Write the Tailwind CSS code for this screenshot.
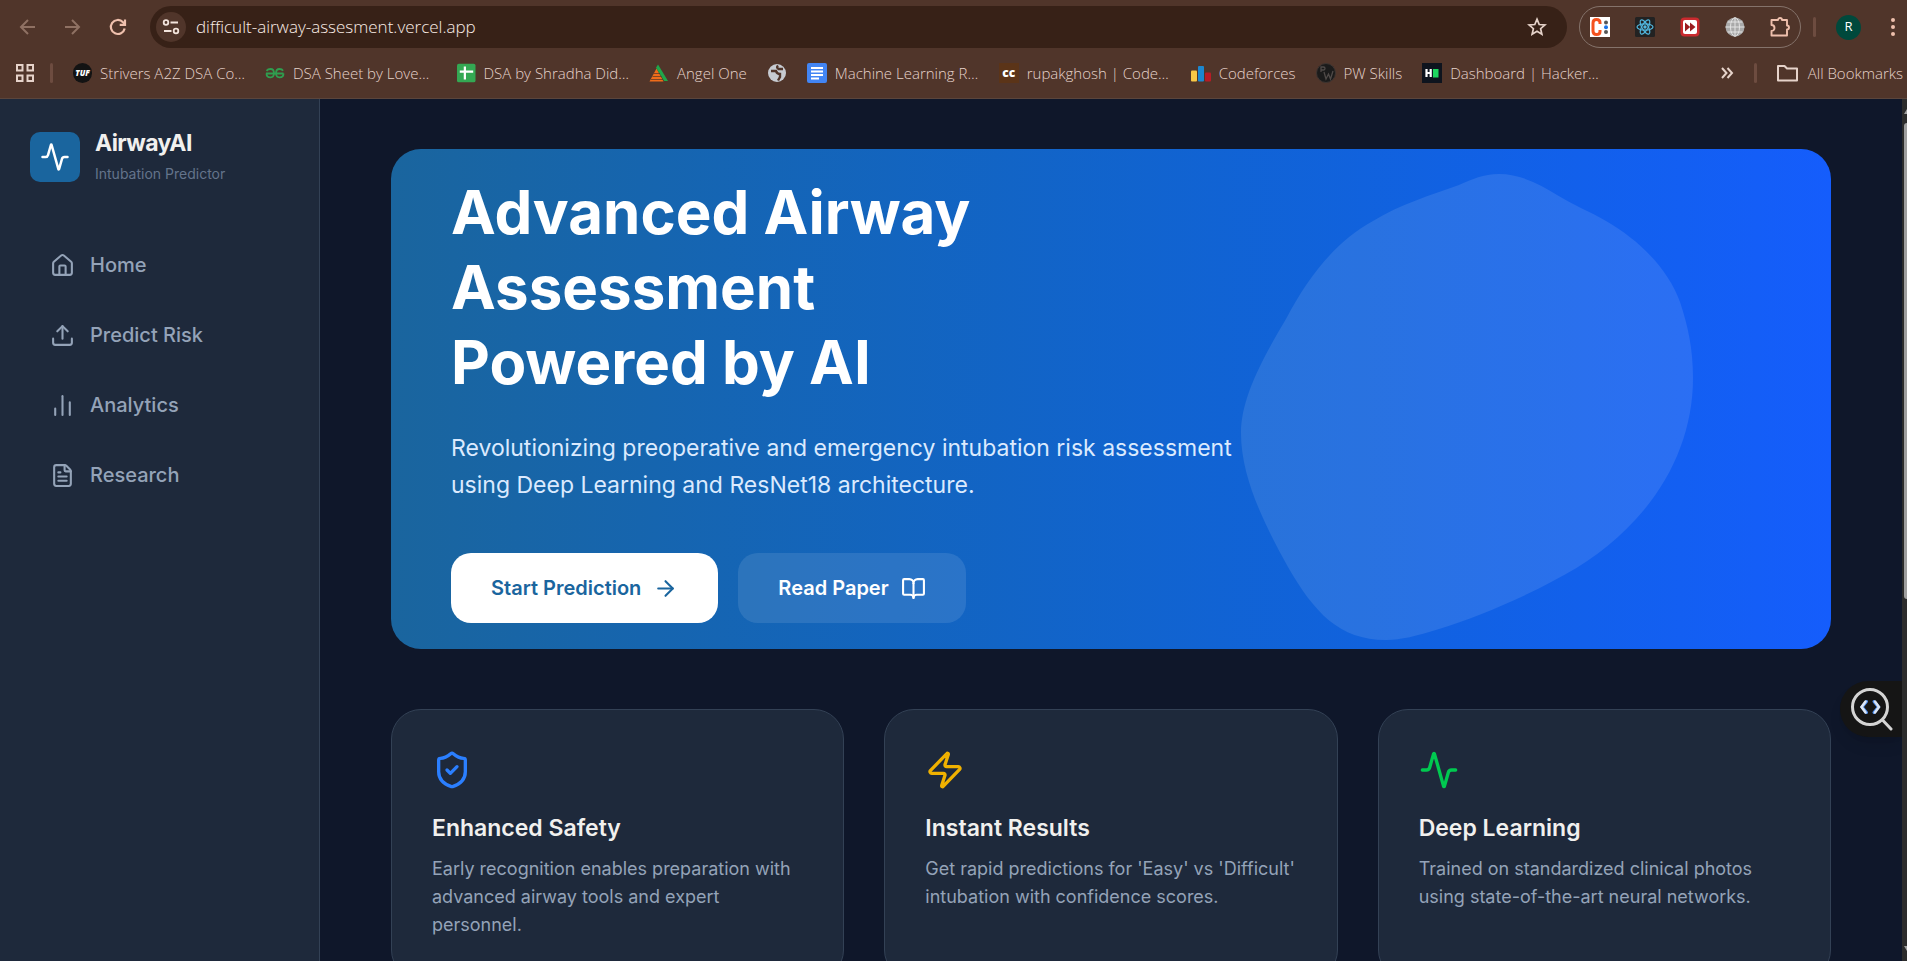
<!DOCTYPE html>
<html lang="en">
<head>
    <meta charset="UTF-8">
    <meta name="viewport" content="width=device-width, initial-scale=1.0">
    <title>AirwayAI - Intubation Predictor</title>
    <script src="https://cdn.jsdelivr.net/npm/@tailwindcss/browser@4"></script>
</head>
<body class="flex h-screen flex-col overflow-hidden bg-[#0f172a] font-['Inter',sans-serif]">
    <!-- Browser bar -->
    <header class="shrink-0 border-b border-[#5a453c] bg-[#50352a] font-['Open_Sans',sans-serif] font-light text-[#e6d3ca]">
        <div class="flex h-[54px] items-center pl-1.5 pr-0.5">
            <button aria-label="Back" class="flex w-11 justify-center text-[#8f7163]">
                <svg class="size-5" viewBox="0 0 20 20" fill="none" stroke="currentColor" stroke-width="2"><path d="M17 10H3.500M10 3L3 10l7 7"/></svg>
            </button>
            <button aria-label="Forward" class="flex w-11 justify-center text-[#8f7163]">
                <svg class="size-5" viewBox="0 0 20 20" fill="none" stroke="currentColor" stroke-width="2"><path d="M3 10h13.500M10 3l7 7-7 7"/></svg>
            </button>
            <button aria-label="Reload" class="flex w-12 justify-center text-[#efc0ad]">
                <svg class="size-5" viewBox="0 0 20 20" fill="none" stroke="currentColor" stroke-width="2.200"><path d="M16.700 11.500A7 7 0 1 1 15 5.200l1.500 1.600"/><path d="M17 2.500v5.300h-5.300"/></svg>
            </button>
            <div class="ml-2 flex h-[42px] flex-1 items-center rounded-full bg-[#372117] pl-1.5 pr-5">
                <button aria-label="Site information" class="flex size-[30px] items-center justify-center rounded-full bg-[#50352a] text-[#f3e4dc]">
                    <svg class="size-5" viewBox="0 0 20 20" fill="none" stroke="currentColor" stroke-width="1.800"><circle cx="5" cy="5.500" r="2.300"/><path d="M9.500 5.500H17M3 14h7.500"/><circle cx="15" cy="14" r="2.300"/></svg>
                </button>
                <input type="text" aria-label="Address" value="difficult-airway-assesment.vercel.app" class="ml-2.5 flex-1 bg-transparent text-[17px] text-[#fbeee7] outline-none">
                <button aria-label="Bookmark this tab">
                    <svg class="size-5" viewBox="0 0 20 20" fill="none" stroke="currentColor" stroke-width="1.700"><path d="M10 2.200l2.200 5.300 5.700.5-4.300 3.700 1.300 5.600-4.900-3-4.900 3 1.300-5.600L2.100 8l5.700-.5z"/></svg>
                </button>
            </div>
            <div class="ml-3 flex h-[42px] w-[222px] items-center justify-between rounded-full border border-[#85736b] px-2.5">
                <svg class="size-5" viewBox="0 0 20 20"><rect width="20" height="20" fill="#fff"/><path d="M10 7V5.500Q10 2.500 6.500 2.500T3 6v8q0 3.500 3.500 3.500T10 14.500V13" fill="none" stroke="#f4511e" stroke-width="3"/><circle cx="16" cy="5.500" r="2" fill="#555"/><circle cx="16" cy="10.300" r="2" fill="#1a73e8"/><circle cx="16" cy="15" r="2" fill="#555"/></svg>
                <svg class="size-5" viewBox="0 0 20 20"><rect width="20" height="20" rx="1.500" fill="#222"/><g fill="none" stroke="#51b8e0" stroke-width="1.200"><ellipse cx="10" cy="10" rx="8" ry="3.100"/><ellipse cx="10" cy="10" rx="8" ry="3.100" transform="rotate(60 10 10)"/><ellipse cx="10" cy="10" rx="8" ry="3.100" transform="rotate(120 10 10)"/></g><circle cx="10" cy="10" r="1.700" fill="#51b8e0"/></svg>
                <svg class="size-5" viewBox="0 0 20 20"><rect x=".5" y=".5" width="19" height="19" rx="4" fill="#c92a2e"/><rect x="3" y="3" width="14" height="14" rx="2" fill="#fff"/><path d="M5 5.500l5.200 4.500L5 14.500zM10 5.500l5.500 4.500-5.500 4.500z" fill="#9b1c20"/></svg>
                <svg class="size-5" viewBox="0 0 20 20"><circle cx="10" cy="10" r="9.500" fill="#a9a9a9"/><g fill="none" stroke="#e3e3e3"><ellipse cx="10" cy="10" rx="4.500" ry="9.300"/><path d="M10 .5v19M.5 10h19M2.500 5h15M2.500 15h15"/></g></svg>
                <svg class="size-5" viewBox="0 0 20 20" fill="none" stroke="#efc0ad" stroke-width="1.900" stroke-linejoin="round"><path d="M1.500 3H8a2 2 0 0 1 4 0h5v5.500a2 2 0 0 1 0 4V18.500H1.500V14a3 3 0 0 0 0-6z"/></svg>
            </div>
            <span class="ml-3 h-5 w-[3px] rounded bg-[#6d4c40]"></span>
            <button aria-label="Profile" class="ml-5 flex size-[25px] items-center justify-center rounded-full bg-[#00493c] text-[13px] font-normal text-white">R</button>
            <button aria-label="Menu" class="ml-5 flex w-6 justify-center text-[#efc0ad]">
                <svg class="size-5" viewBox="0 0 20 20" fill="currentColor"><circle cx="10" cy="3" r="2"/><circle cx="10" cy="10" r="2"/><circle cx="10" cy="17" r="2"/></svg>
            </button>
        </div>

        <!-- Bookmarks -->
        <div class="flex h-11 items-center gap-5 whitespace-nowrap pb-1.5 pl-4 pr-1 text-[15px]">
            <div class="flex shrink-0 items-center gap-4">
                <svg class="size-[18px]" viewBox="0 0 18 18" fill="none" stroke="currentColor" stroke-width="2"><path d="M1 1h5.500v5.500H1zM11.500 1H17v5.500h-5.500zM1 11.500h5.500V17H1zM11.500 11.500H17V17h-5.500z"/></svg>
                <span class="h-5 w-[3px] rounded bg-[#6d4c40]"></span>
            </div>
            <a href="#" class="flex w-[172px] items-center gap-2">
                <span class="flex size-5 items-center justify-center rounded-full bg-[#131313] text-[8px] font-extrabold italic text-white">TUF</span>
                Strivers A2Z DSA Co…
            </a>
            <a href="#" class="flex w-[172px] items-center gap-2">
                <svg class="size-5" viewBox="0 0 20 20" fill="none" stroke="#2f9e4f" stroke-width="1.800"><path d="M1 10.500h17.500M1.500 7.800Q3 6 5.500 6 9 6 9 10.300T5.300 14.300Q1.500 14.300 1.500 10.500M18 7.800Q17 6 14.500 6 11 6 11 10.300t3.700 4q3.800 0 3.800-3.800"/></svg>
                DSA Sheet by Love…
            </a>
            <a href="#" class="flex w-[172px] items-center gap-2">
                <svg class="size-5" viewBox="0 0 20 20"><rect width="20" height="20" rx="2" fill="#34a853"/><path d="M8.500 3v14M3 8.500h14.500" stroke="#fff" stroke-width="2.400"/></svg>
                DSA by Shradha Did…
            </a>
            <a href="#" class="flex items-center gap-2">
                <svg class="size-5" viewBox="0 0 20 20"><path d="M7.500 5.500L14.500 18.500H.5z" fill="#ef6c1a"/><path d="M9 1.500l10 16.500h-3.800L7 4.800z" fill="#1fa64a"/><path d="M5 10.500h6M3.500 13.500h9M2 16.500h12" stroke="#50352a" stroke-width=".7"/></svg>
                Angel One
            </a>
            <a href="#" aria-label="Bookmark" class="flex items-center">
                <svg class="size-5" viewBox="0 0 20 20"><circle cx="10" cy="10" r="9" fill="#c7cbd1"/><path d="M4 8h5q1 3 4 3v3l-2 3.500M11 2.500q-2 2 .5 3.500H16" fill="none" stroke="#50352a" stroke-width="2.400"/></svg>
            </a>
            <a href="#" class="flex w-[172px] items-center gap-2">
                <svg class="size-5" viewBox="0 0 20 20"><rect width="20" height="20" rx="2" fill="#4285f4"/><path d="M4 5h12M4 8.500h12M4 12h12M4 15.500h8" stroke="#fff" stroke-width="1.800"/></svg>
                Machine Learning R…
            </a>
            <a href="#" class="flex w-[172px] items-center gap-2">
                <span class="flex size-5 items-center justify-center bg-[#5b3418] text-[12px] font-extrabold text-white">cc</span>
                rupakghosh | Code…
            </a>
            <a href="#" class="flex items-center gap-2">
                <svg class="size-5" viewBox="0 0 20 20"><rect y="7.500" width="6" height="11" rx="1" fill="#f9c846"/><rect x="7" y="3" width="6" height="15.500" rx="1" fill="#1c87cf"/><rect x="14" y="9.500" width="6" height="9" rx="1" fill="#b71c26"/></svg>
                Codeforces
            </a>
            <a href="#" class="flex items-center gap-2">
                <svg class="size-5" viewBox="0 0 20 20"><circle cx="10" cy="10" r="9.500" fill="#1b1b1b" stroke="#3d3431"/><path d="M5 9V4h2.500a1.500 1.500 0 0 1 0 3H5M8 9l2 7 2.500-5 2 5L17 8" fill="none" stroke="#4f4a48" stroke-width="1.300"/></svg>
                PW Skills
            </a>
            <a href="#" class="flex items-center gap-2">
                <svg class="size-5" viewBox="0 0 20 20"><rect width="20" height="20" fill="#0e141e"/><path d="M4.500 6v8M8.700 6v8M4.500 10h4" stroke="#fff" stroke-width="2.200"/><rect x="11" y="6" width="5.500" height="8.500" fill="#1ed760"/></svg>
                Dashboard | Hacker…
            </a>
            <button aria-label="More bookmarks" class="ml-auto">
                <svg class="size-3.5" viewBox="0 0 14 14" fill="none" stroke="currentColor" stroke-width="2"><path d="M2 2l4.500 5L2 12M7.500 2L12 7l-4.500 5"/></svg>
            </button>
            <span class="h-5 w-[3px] rounded bg-[#6d4c40]"></span>
            <a href="#" class="flex items-center gap-2.5">
                <svg class="h-[18px] w-[21px]" viewBox="0 0 21 18" fill="none" stroke="currentColor" stroke-width="2" stroke-linejoin="round"><path d="M1 2h6.500l2.500 2.500H20V16.500H1z"/></svg>
                All Bookmarks
            </a>
        </div>
    </header>

    <div class="flex min-h-0 flex-1">
        <!-- Sidebar -->
        <aside class="w-80 shrink-0 border-r border-[#334155] bg-[#1e293b] p-[30px]">
            <div class="flex h-14 items-center gap-[15px]">
                <div class="flex size-[50px] items-center justify-center rounded-[10px] bg-[#1a659e] text-white">
                    <svg class="size-[30px]" viewBox="0 0 24 24" fill="none" stroke="currentColor" stroke-width="2" stroke-linecap="round" stroke-linejoin="round"><path d="M22 12h-2.480a2 2 0 0 0-1.930 1.460l-2.350 8.360a.25.25 0 0 1-.48 0L9.240 2.180a.25.25 0 0 0-.48 0l-2.350 8.360A2 2 0 0 1 4.490 12H2"/></svg>
                </div>
                <div>
                    <h2 class="text-[23px] leading-[34px] font-bold tracking-tight text-[#f1f0ee]">AirwayAI</h2>
                    <p class="text-[14px] leading-7 text-[#64748b]">Intubation Predictor</p>
                </div>
            </div>
            <nav class="mt-[50px] flex flex-col gap-2.5 text-[20px] font-medium text-[#94a3b8]">
                <a href="#" class="flex h-[60px] items-center gap-[15px] rounded-2xl px-5">
                    <svg class="size-[25px]" viewBox="0 0 24 24" fill="none" stroke="currentColor" stroke-width="2" stroke-linecap="round" stroke-linejoin="round"><path d="M15 21v-8a1 1 0 0 0-1-1h-4a1 1 0 0 0-1 1v8"/><path d="M3 10a2 2 0 0 1 .709-1.528l7-6a2 2 0 0 1 2.582 0l7 6A2 2 0 0 1 21 10v9a2 2 0 0 1-2 2H5a2 2 0 0 1-2-2z"/></svg>
                    Home
                </a>
                <a href="#" class="flex h-[60px] items-center gap-[15px] rounded-2xl px-5">
                    <svg class="size-[25px]" viewBox="0 0 24 24" fill="none" stroke="currentColor" stroke-width="2" stroke-linecap="round" stroke-linejoin="round"><path d="M12 3v12"/><path d="m17 8-5-5-5 5"/><path d="M21 15v4a2 2 0 0 1-2 2H5a2 2 0 0 1-2-2v-4"/></svg>
                    Predict Risk
                </a>
                <a href="#" class="flex h-[60px] items-center gap-[15px] rounded-2xl px-5">
                    <svg class="size-[25px]" viewBox="0 0 24 24" fill="none" stroke="currentColor" stroke-width="2" stroke-linecap="round" stroke-linejoin="round"><path d="M5 21v-6"/><path d="M12 21V3"/><path d="M19 21V9"/></svg>
                    Analytics
                </a>
                <a href="#" class="flex h-[60px] items-center gap-[15px] rounded-2xl px-5">
                    <svg class="size-[25px]" viewBox="0 0 24 24" fill="none" stroke="currentColor" stroke-width="2" stroke-linecap="round" stroke-linejoin="round"><path d="M6 22a2 2 0 0 1-2-2V4a2 2 0 0 1 2-2h8a2.400 2.400 0 0 1 1.704.706l3.588 3.588A2.400 2.400 0 0 1 20 8v12a2 2 0 0 1-2 2z"/><path d="M14 2v5a1 1 0 0 0 1 1h5"/><path d="M10 9H8"/><path d="M16 13H8"/><path d="M16 17H8"/></svg>
                    Research
                </a>
            </nav>
        </aside>

        <main class="relative min-w-0 flex-1 overflow-hidden px-[50px] pt-[50px]">
            <div class="mx-auto flex max-w-[1440px] flex-col gap-[60px]">
                <!-- Hero -->
                <section class="relative flex h-[500px] items-center overflow-hidden rounded-[30px] bg-linear-to-r from-[#1a659e] to-[#155dfc] px-[60px]">
                    <svg class="absolute inset-y-0 right-0 h-full w-1/2 text-white/10" viewBox="0 0 720 500" fill="currentColor"><path d="M388 25C410 25 430 36 446 46C462 56 480 63 495 72C530 92 558 122 569 153C577 177 582 200 582 229C582 280 562 330 525 370C500 397 475 415 442 432C405 452 360 470 328 480C305 487 290 491 275 491C228 491 203 463 177 418C155 378 130 330 130 284C130 250 150 212 175 170C197 128 225 92 262 72C290 55 320 46 348 36C362 30 372 25 388 25Z"/></svg>
                    <div class="relative max-w-[840px]">
                        <h1 class="mb-[30px] text-[60px] leading-[75px] font-bold text-white">Advanced Airway Assessment<br>Powered by AI</h1>
                        <p class="mb-[49px] text-[23px] leading-[37px] text-[#dbeafe]">Revolutionizing preoperative and emergency intubation risk assessment using Deep Learning and ResNet18 architecture.</p>
                        <div class="flex gap-5 text-[20px] font-semibold">
                            <button class="flex h-[70px] items-center gap-3 rounded-[20px] bg-white px-10 text-[#1a659e]">
                                Start Prediction
                                <svg class="size-[25px]" viewBox="0 0 24 24" fill="none" stroke="currentColor" stroke-width="2" stroke-linecap="round" stroke-linejoin="round"><path d="M5 12h14"/><path d="m12 5 7 7-7 7"/></svg>
                            </button>
                            <button class="flex h-[70px] items-center gap-3 rounded-[20px] bg-white/10 px-10 text-white">
                                Read Paper
                                <svg class="size-[25px]" viewBox="0 0 24 24" fill="none" stroke="currentColor" stroke-width="2" stroke-linecap="round" stroke-linejoin="round"><path d="M12 7v14"/><path d="M3 18a1 1 0 0 1-1-1V4a1 1 0 0 1 1-1h5a4 4 0 0 1 4 4 4 4 0 0 1 4-4h5a1 1 0 0 1 1 1v13a1 1 0 0 1-1 1h-6a3 3 0 0 0-3 3 3 3 0 0 0-3-3z"/></svg>
                            </button>
                        </div>
                    </div>
                </section>

                <!-- Features -->
                <section class="grid grid-cols-3 gap-10">
                    <div class="rounded-[30px] border border-[#334155] bg-[#1e293b] p-10">
                        <svg class="mb-5 size-10 text-[#2b7fff]" viewBox="0 0 24 24" fill="none" stroke="currentColor" stroke-width="2" stroke-linecap="round" stroke-linejoin="round"><path d="M20 13c0 5-3.500 7.500-7.660 8.950a1 1 0 0 1-.67-.01C7.500 20.500 4 18 4 13V6a1 1 0 0 1 1-1c2 0 4.500-1.200 6.240-2.720a1.170 1.170 0 0 1 1.520 0C14.510 3.810 17 5 19 5a1 1 0 0 1 1 1z"/><path d="m9 12 2 2 4-4"/></svg>
                        <h3 class="mb-2 text-[23px] leading-[37px] font-semibold text-[#f1f0ee]">Enhanced Safety</h3>
                        <p class="text-[18px] leading-7 text-[#94a3b8]">Early recognition enables preparation with advanced airway tools and expert personnel.</p>
                    </div>
                    <div class="rounded-[30px] border border-[#334155] bg-[#1e293b] p-10">
                        <svg class="mb-5 size-10 text-[#f0b100]" viewBox="0 0 24 24" fill="none" stroke="currentColor" stroke-width="2" stroke-linecap="round" stroke-linejoin="round"><path d="M4 14a1 1 0 0 1-.78-1.630l9.900-10.200a.5.5 0 0 1 .86.460l-1.920 6.020A1 1 0 0 0 13 10h7a1 1 0 0 1 .78 1.630l-9.900 10.200a.5.5 0 0 1-.86-.460l1.920-6.020A1 1 0 0 0 11 14z"/></svg>
                        <h3 class="mb-2 text-[23px] leading-[37px] font-semibold text-[#f1f0ee]">Instant Results</h3>
                        <p class="text-[18px] leading-7 text-[#94a3b8]">Get rapid predictions for 'Easy' vs 'Difficult' intubation with confidence scores.</p>
                    </div>
                    <div class="rounded-[30px] border border-[#334155] bg-[#1e293b] p-10">
                        <svg class="mb-5 size-10 text-[#00c950]" viewBox="0 0 24 24" fill="none" stroke="currentColor" stroke-width="2" stroke-linecap="round" stroke-linejoin="round"><path d="M22 12h-2.480a2 2 0 0 0-1.930 1.460l-2.350 8.360a.25.25 0 0 1-.48 0L9.240 2.180a.25.25 0 0 0-.48 0l-2.350 8.360A2 2 0 0 1 4.490 12H2"/></svg>
                        <h3 class="mb-2 text-[23px] leading-[37px] font-semibold text-[#f1f0ee]">Deep Learning</h3>
                        <p class="text-[18px] leading-7 text-[#94a3b8]">Trained on standardized clinical photos using state-of-the-art neural networks.</p>
                    </div>
                </section>
            </div>

            <!-- Extension button -->
            <button aria-label="Inspect code" class="absolute top-[582px] right-0 flex h-14 w-[62px] items-center justify-center rounded-l-full bg-[#151515] shadow-lg">
                <svg class="size-11" viewBox="0 0 44 44" fill="none" stroke="#d4d4d4" stroke-width="3" stroke-linecap="round"><circle cx="21" cy="20" r="17.500"/><path d="M33.500 33L42 42"/><path d="M17.500 14.500L13 20l4.500 5.500M25 14.500l4.500 5.500-4.500 5.500" stroke="#4f8ff0"/><path d="M16.500 14.500L12.500 20l4 5.500M26 14.500l4 5.500-4 5.500" stroke="#dce6f5" stroke-width="2.500"/></svg>
            </button>
        </main>

        <!-- Scrollbar -->
        <div class="flex w-[5px] shrink-0 flex-col items-end bg-[#2c2c2c] py-2">
            <svg class="h-2 w-[3px]" viewBox="0 0 3 8" fill="#9f9f9f"><path d="M0 7L3 2v5z"/></svg>
            <div class="mt-2 h-[476px] w-[3px] rounded-l-full bg-[#9f9f9f]"></div>
            <svg class="mt-auto h-2 w-[3px]" viewBox="0 0 3 8" fill="#9f9f9f"><path d="M0 1h3v5z"/></svg>
        </div>
    </div>
</body>
</html>
